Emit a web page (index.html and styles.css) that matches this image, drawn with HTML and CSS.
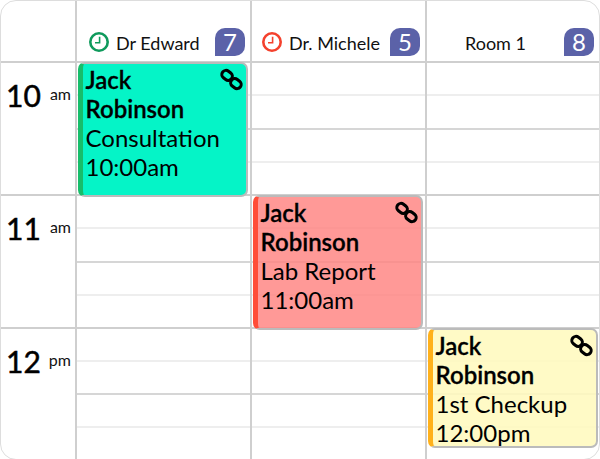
FILE: index.html
```html
<!DOCTYPE html>
<html lang="en">
<head>
<meta charset="utf-8">
<title>Calendar</title>
<link rel="stylesheet" href="styles.css">
</head>
<body>
<svg class="defs" width="0" height="0" aria-hidden="true">
  <symbol id="link" viewBox="0 0 24 24">
    <g fill="none" stroke="#000" stroke-width="3.2">
      <rect x="1.6" y="3.4" width="11.6" height="8.6" rx="4.3" transform="rotate(38 7.4 7.7)"/>
      <rect x="10.8" y="12" width="11.6" height="8.6" rx="4.3" transform="rotate(38 16.6 16.3)"/>
    </g>
  </symbol>
  <symbol id="clock" viewBox="0 0 20 20">
    <circle cx="10" cy="10" r="8.7" fill="none" stroke="currentColor" stroke-width="2.6"/>
    <path d="M10.6 4.8v6H6" fill="none" stroke="currentColor" stroke-width="1.6"/>
  </symbol>
</svg>
<main class="calendar">
  <div class="corner"></div>
  <div class="head"><svg class="clock green"><use href="#clock"/></svg><span class="name">Dr Edward</span><span class="badge">7</span></div>
  <div class="head narrow"><svg class="clock red"><use href="#clock"/></svg><span class="name">Dr. Michele</span><span class="badge">5</span></div>
  <div class="head room"><span class="name">Room 1</span><span class="badge">8</span></div>

  <div class="time"><span class="hour">10</span><span class="mer">am</span></div>
  <div class="cell">
    <div class="slots"><i></i><i class="half"></i><i></i><i></i></div>
    <article class="event teal"><svg class="link"><use href="#link"/></svg><b>Jack<br>Robinson</b><br>Consultation<br>10:00am</article>
  </div>
  <div class="cell"><div class="slots"><i></i><i class="half"></i><i></i><i></i></div></div>
  <div class="cell"><div class="slots"><i></i><i class="half"></i><i></i><i></i></div></div>

  <div class="time"><span class="hour">11</span><span class="mer">am</span></div>
  <div class="cell"><div class="slots"><i></i><i class="half"></i><i></i><i></i></div></div>
  <div class="cell">
    <div class="slots"><i></i><i class="half"></i><i></i><i></i></div>
    <article class="event coral"><svg class="link"><use href="#link"/></svg><b>Jack<br>Robinson</b><br>Lab Report<br>11:00am</article>
  </div>
  <div class="cell"><div class="slots"><i></i><i class="half"></i><i></i><i></i></div></div>

  <div class="time"><span class="hour">12</span><span class="mer">pm</span></div>
  <div class="cell"><div class="slots"><i></i><i class="half"></i><i></i><i></i></div></div>
  <div class="cell"><div class="slots"><i></i><i class="half"></i><i></i><i></i></div></div>
  <div class="cell">
    <div class="slots"><i></i><i class="half"></i><i></i><i></i></div>
    <article class="event yellow"><svg class="link"><use href="#link"/></svg><b>Jack<br>Robinson</b><br>1st Checkup<br>12:00pm</article>
  </div>
</main>
</body>
</html>
```
FILE: styles.css
```css
html, body {
  margin: 0;
  padding: 0;
  background: #fff;
}
body {
  width: 600px;
  height: 459px;
  overflow: hidden;
  font-family: Lato, sans-serif;
  color: #000;
}
.defs { position: absolute; }
.calendar {
  box-sizing: border-box;
  width: 600px;
  height: 460px;
  display: grid;
  grid-template-columns: 74px 175px 175px 174px;
  grid-template-rows: 60px 133px 133px 132px;
  border: 1px solid #ddd;
  border-radius: 16px;
  overflow: hidden;
}
.head {
  border-left: 2px solid #cfcfcf;
  display: flex;
  align-items: flex-end;
  padding: 0 5px 5px 12px;
  font-size: 18px;
  line-height: 24px;
  color: #111;
}
.head .name { flex: 1; white-space: nowrap; margin-bottom: 1px; }
.narrow { padding-left: 10px; }
.room { padding-left: 38px; }
.clock { width: 20px; height: 20px; margin: 0 7px 4px 0; flex: none; }
.green { color: #0f9a5c; }
.red { color: #f4412d; }
.badge {
  width: 30px;
  height: 28px;
  background: #5b62a8;
  color: #fff;
  border-radius: 10px 10px 10px 0;
  font-size: 24px;
  line-height: 28px;
  text-align: center;
  flex: none;
}
.time {
  border-top: 2px solid #cfcfcf;
  display: flex;
  justify-content: space-between;
  padding: 14px 4px 0 5px;
}
.hour { font-size: 30px; line-height: 36px; -webkit-text-stroke: 0.5px #000; }
.mer { font-size: 16px; line-height: 20px; margin-top: 7px; color: #111; }
.cell {
  position: relative;
  border-left: 2px solid #cfcfcf;
  border-top: 2px solid #cfcfcf;
}
.slots { display: flex; flex-direction: column; height: 100%; }
.slots i {
  display: block;
  flex: 1;
  border-bottom: 2px solid #eee;
}
.slots i.half { border-bottom-color: #d6d6d6; }
.slots i:last-child { border-bottom: 0; }
.event {
  position: absolute;
  left: 1px;
  top: -1px;
  width: 170px;
  height: 135px;
  box-sizing: border-box;
  padding: 1px 4px 0 2.5px;
  font-size: 24px;
  line-height: 29px;
  border: 2px solid #bbb;
  border-left: 5px solid;
  border-radius: 7px;
  white-space: nowrap;
  z-index: 2;
}
.event b { font-weight: 600; -webkit-text-stroke: 0.3px #000; }
.link { position: absolute; right: 3px; top: 4px; width: 23px; height: 23px; }
.teal { background: rgba(0, 244, 198, 0.98); border-left-color: #17bd6a; }
.coral { background: rgba(255, 130, 128, 0.82); border-left-color: #ff4d38; }
.yellow { background: rgba(255, 249, 190, 0.88); border-left-color: #ffb11b; height: 120px; }
```
